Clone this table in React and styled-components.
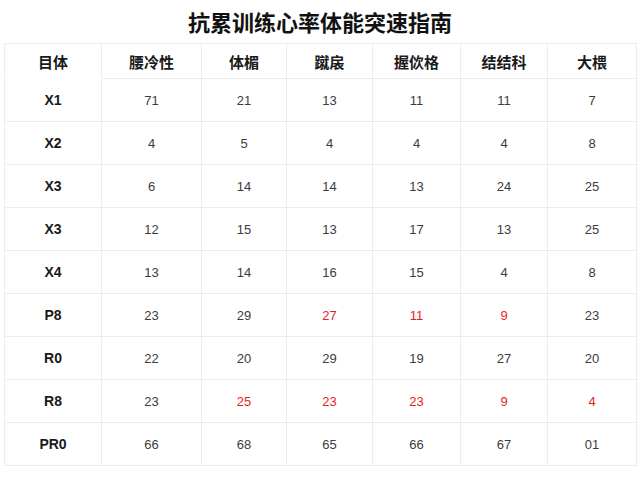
import React from "react";
import styled, { createGlobalStyle } from "styled-components";

const GlobalStyle = createGlobalStyle`
  html, body {
    margin: 0;
    padding: 0;
    background: #ffffff;
  }
  body {
    font-family: "Noto Sans CJK SC", "Noto Sans", "Liberation Sans", sans-serif;
  }
`;

const headers = ["目体", "腰冷性", "体楣", "蹴扆", "握佽格", "结结科", "大椳"];
const widths = [97, 100, 85, 86, 88, 87, 89];

// red marks columns flagged in the guide
const rows = [
  { label: "X1", values: ["71", "21", "13", "11", "11", "7"] },
  { label: "X2", values: ["4", "5", "4", "4", "4", "8"] },
  { label: "X3", values: ["6", "14", "14", "13", "24", "25"] },
  { label: "X3", values: ["12", "15", "13", "17", "13", "25"] },
  { label: "X4", values: ["13", "14", "16", "15", "4", "8"] },
  { label: "P8", values: ["23", "29", "27", "11", "9", "23"], red: [2, 3, 4] },
  { label: "R0", values: ["22", "20", "29", "19", "27", "20"] },
  { label: "R8", values: ["23", "25", "23", "23", "9", "4"], red: [1, 2, 3, 4, 5] },
  { label: "PR0", values: ["66", "68", "65", "66", "67", "01"] },
];

const Page = styled.div`
  width: 640px;
  height: 480px;
  box-sizing: border-box;
  padding: 0 4px;
  display: flex;
  flex-direction: column;
`;

const Title = styled.h1`
  margin: 0;
  height: 43px;
  display: flex;
  align-items: center;
  justify-content: center;
  font-size: 22px;
  font-weight: 700;
  color: #111;
  padding-bottom: 2px;
  box-sizing: border-box;
`;

const Table = styled.table`
  border-collapse: collapse;
  table-layout: fixed;
  width: 632px;
  border: 1px solid #e4e4e4;
`;

const HeadCell = styled.th`
  height: 34px;
  padding: 0;
  border: 1px solid #ececec;
  border-bottom-color: ${({ $first }) => ($first ? "#ffffff" : "#ececec")};
  font-size: 15px;
  font-weight: 700;
  color: #1a1a1a;
  text-align: center;
  vertical-align: middle;
`;

const Row = styled.tr`
  height: 43px;
`;

const LabelCell = styled.td`
  padding: 0;
  border: 1px solid #ececec;
  font-family: "Liberation Sans", Arial, sans-serif;
  font-size: 14px;
  font-weight: 700;
  color: #1a1a1a;
  text-align: center;
  vertical-align: middle;
`;

const ValueCell = styled.td`
  padding: 0;
  border: 1px solid #ececec;
  font-family: "Liberation Sans", Arial, sans-serif;
  font-size: 13px;
  color: ${({ $red }) => ($red ? "#e61e1e" : "#3c3c3c")};
  text-align: center;
  vertical-align: middle;
`;

export default function App() {
  return (
    <>
      <GlobalStyle />
      <Page>
        <Title>抗累训练心率体能突速指南</Title>
        <Table>
          <colgroup>
            {widths.map((w, i) => (
              <col key={i} style={{ width: w }} />
            ))}
          </colgroup>
          <thead>
            <tr>
              {headers.map((h, i) => (
                <HeadCell key={i} $first={i === 0}>
                  {h}
                </HeadCell>
              ))}
            </tr>
          </thead>
          <tbody>
            {rows.map((r, ri) => (
              <Row key={ri}>
                <LabelCell>{r.label}</LabelCell>
                {r.values.map((v, vi) => (
                  <ValueCell key={vi} $red={r.red && r.red.includes(vi)}>
                    {v}
                  </ValueCell>
                ))}
              </Row>
            ))}
          </tbody>
        </Table>
      </Page>
    </>
  );
}
